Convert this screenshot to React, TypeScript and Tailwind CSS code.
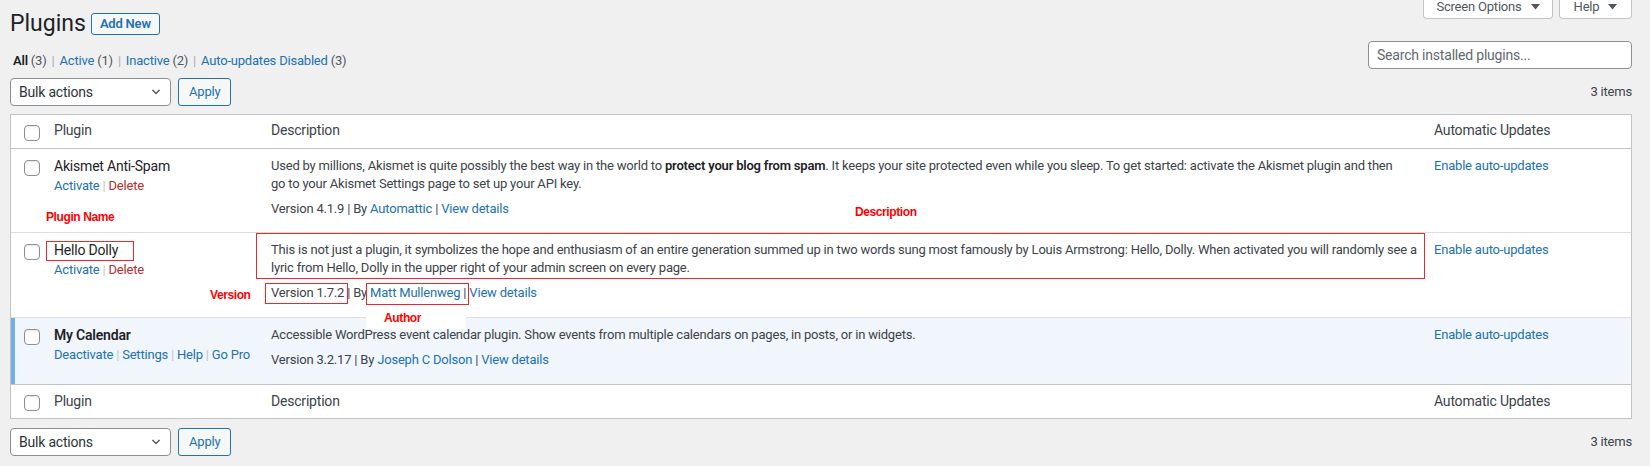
import React from "react";

interface PluginRow {
  name: string;
  active: boolean;
  actions: { label: string; danger?: boolean }[];
  desc: React.ReactNode[];
  version: string;
  author: string;
}

const plugins: PluginRow[] = [
  {
    name: "Akismet Anti-Spam",
    active: false,
    actions: [{ label: "Activate" }, { label: "Delete", danger: true }],
    desc: [
      <>
        Used by millions, Akismet is quite possibly the best way in the world to{" "}
        <strong className="font-semibold text-[#1d2327]">protect your blog from spam</strong>. It keeps your site protected
        even while you sleep. To get started: activate the Akismet plugin and then
      </>,
      <>go to your Akismet Settings page to set up your API key.</>,
    ],
    version: "4.1.9",
    author: "Automattic",
  },
  {
    name: "Hello Dolly",
    active: false,
    actions: [{ label: "Activate" }, { label: "Delete", danger: true }],
    desc: [
      <>
        This is not just a plugin, it symbolizes the hope and enthusiasm of an entire generation summed up in two words
        sung most famously by Louis Armstrong: Hello, Dolly. When activated you will randomly see a
      </>,
      <>lyric from Hello, Dolly in the upper right of your admin screen on every page.</>,
    ],
    version: "1.7.2",
    author: "Matt Mullenweg",
  },
  {
    name: "My Calendar",
    active: true,
    actions: [{ label: "Deactivate" }, { label: "Settings" }, { label: "Help" }, { label: "Go Pro" }],
    desc: [<>Accessible WordPress event calendar plugin. Show events from multiple calendars on pages, in posts, or in widgets.</>],
    version: "3.2.17",
    author: "Joseph C Dolson",
  },
];

const cols = "grid grid-cols-[33px_217px_1163px_1fr]";
const note = "font-['Liberation_Sans',sans-serif] text-[12px] font-bold tracking-[-0.4px] leading-[16px] text-[#ff0000]";
const redBox = "pointer-events-none absolute border-[1.5px] border-[#f0262b]";

const Checkbox = () => (
  <span className="block h-4 w-4 rounded-[4px] border border-[#8c8f94] bg-white shadow-[inset_0_1px_2px_rgba(0,0,0,0.1)]" />
);

const Caret = () => (
  <svg width="9" height="6" viewBox="0 0 9 6" className="ml-[9px]">
    <polygon points="0,0 9,0 4.5,5.5" fill="#50575e" />
  </svg>
);

const BulkBar = () => (
  <div className="flex h-[28px] items-center justify-between">
    <div className="flex items-center gap-[7px]">
      <div className="flex h-[28px] w-[161px] items-center justify-between rounded-[4px] border border-[#8c8f94] bg-white pl-[8px] pr-[8px] text-[14px] text-[#2c3338]">
        <span>Bulk actions</span>
        <svg width="12" height="12" viewBox="0 0 20 20">
          <path d="M5 6l5 5 5-5 2 1-7 7-7-7 2-1z" fill="#555" />
        </svg>
      </div>
      <button className="h-[28px] rounded-[3px] border border-[#2271b1] bg-[#f6f7f7] px-[10px] text-[13px] text-[#2271b1]">
        Apply
      </button>
    </div>
    <span className="text-[13px]">3 items</span>
  </div>
);

const HeadRow = ({ foot }: { foot?: boolean }) => (
  <div className={`${cols} ${foot ? "border-t" : "border-b"} border-[#c3c4c7] text-[14px] leading-[19px]`}>
    <div className="pl-[13px] pt-[10px]">
      <Checkbox />
    </div>
    <div className={`pl-[10px] ${foot ? "pt-[7px] pb-[7px]" : "pt-[6px] pb-[8px]"}`}>Plugin</div>
    <div className={`pl-[10px] ${foot ? "pt-[7px]" : "pt-[6px]"}`}>Description</div>
    <div className={`pl-[10px] ${foot ? "pt-[7px]" : "pt-[6px]"}`}>Automatic Updates</div>
  </div>
);

const Row = ({ p, idx, last }: { p: PluginRow; idx: number; last: boolean }) => {
  const dolly = idx === 1;
  const akismet = idx === 0;

  return (
    <div className={`${cols} ${last ? "" : "border-b border-[#dcdcde]"} ${p.active ? "bg-[#f0f6fc]" : ""}`}>
      {/* check column */}
      <div className={p.active ? "border-l-4 border-[#72aee6] pl-[9px] pt-[11px]" : "pl-[13px] pt-[11px]"}>
        <Checkbox />
      </div>

      {/* plugin title */}
      <div className="relative pl-[10px] pt-[8px]">
        <div className={`text-[14px] leading-[19px] text-[#1d2327] ${p.active ? "font-semibold" : ""}`}>
          <span className="relative">
            {p.name}
            {dolly && <span className={`${redBox} -left-[8px] -top-[1px] h-[20px] w-[88px]`} />}
          </span>
        </div>
        <div className="whitespace-nowrap pt-[1px] text-[13px] leading-[18px]">
          {p.actions.map((a, i) => (
            <span key={a.label}>
              {i > 0 && <span className="mx-[3px] text-[#c3c4c7]">|</span>}
              <a className={a.danger ? "text-[#b32d2e]" : "text-[#2271b1]"}>{a.label}</a>
            </span>
          ))}
        </div>
        {akismet && <span className={`${note} absolute left-[2px] top-[60px]`}>Plugin Name</span>}
        {dolly && <span className={`${note} absolute left-[166px] top-[54px]`}>Version</span>}
      </div>

      {/* description */}
      <div className={`relative px-[10px] pt-[8px] text-[13px] leading-[18px] ${akismet ? "pb-[14px]" : "pb-[15px]"}`}>
        <div className="relative whitespace-nowrap">
          {p.desc.map((line, i) => (
            <div key={i}>{line}</div>
          ))}
          {dolly && <span className={`${redBox} -left-[15px] -right-[11px] -top-[8px] -bottom-[2px]`} />}
        </div>
        <div className="mt-[7px] whitespace-nowrap">
          <span className="relative">
            Version {p.version}
            {dolly && <span className={`${redBox} -left-[6px] -right-[4px] -top-[2px] -bottom-[4px]`} />}
          </span>{" "}
          | By{" "}
          <span className="relative">
            <a className="text-[#2271b1]">{p.author}</a> |
            {dolly && (
              <>
                <span className={`${redBox} -left-[4px] -right-[3px] -top-[2px] -bottom-[5px]`} />
                <span className={`${note} absolute -left-[4px] top-[24px] z-10 h-[20px] w-[100px] bg-white pl-[18px] pt-[1px]`}>
                  Author
                </span>
              </>
            )}
          </span>{" "}
          <a className="text-[#2271b1]">View details</a>
        </div>
        {akismet && <span className={`${note} absolute left-[594px] top-[55px]`}>Description</span>}
      </div>

      {/* auto updates */}
      <div className="pl-[10px] pt-[8px] text-[13px] leading-[18px]">
        <a className="text-[#2271b1]">Enable auto-updates</a>
      </div>
    </div>
  );
};

export default function App() {
  return (
    <div className="min-h-screen overflow-hidden bg-[#f0f0f1] pl-[10px] pr-[18px] font-['Roboto',sans-serif] text-[13px] tracking-[-0.2px] text-[#3c434a]">
      {/* title + screen meta */}
      <div className="flex items-start justify-between">
        <div className="flex items-center pt-[9px]">
          <h1 className="text-[23px] leading-[30px] tracking-normal text-[#1d2327]">Plugins</h1>
          <a className="ml-[5px] rounded-[3px] border border-[#2271b1] bg-[#f6f7f7] px-[8px] py-[3px] text-[13px] font-semibold leading-[14px] text-[#2271b1]">
            Add New
          </a>
        </div>
        <div className="-mt-[7px] flex gap-[6px]">
          <button className="flex h-[26px] w-[130px] items-center justify-center rounded-b-[4px] border border-t-0 border-[#c3c4c7] bg-white pt-[2px] text-[13px] text-[#50575e]">
            Screen Options
            <Caret />
          </button>
          <button className="flex h-[26px] w-[73px] items-center justify-center rounded-b-[4px] border border-t-0 border-[#c3c4c7] bg-white pt-[2px] text-[13px] text-[#50575e]">
            Help
            <Caret />
          </button>
        </div>
      </div>

      {/* filters + search */}
      <div className="flex items-start justify-between">
        <div className="mt-[13px] pl-[3px] leading-[18px] text-[#50575e]">
          <span className="font-semibold text-[#1d2327]">All</span> (3)
          <span className="mx-[5px] text-[#a7aaad]">|</span>
          <a className="text-[#2271b1]">Active</a> (1)
          <span className="mx-[5px] text-[#a7aaad]">|</span>
          <a className="text-[#2271b1]">Inactive</a> (2)
          <span className="mx-[5px] text-[#a7aaad]">|</span>
          <a className="text-[#2271b1]">Auto-updates Disabled</a> (3)
        </div>
        <div className="mt-[2px] flex h-[28px] w-[264px] items-center rounded-[4px] border border-[#8c8f94] bg-white px-[8px] text-[14px] text-[#646970]">
          Search installed plugins...
        </div>
      </div>

      <div className="mt-[8px]">
        <BulkBar />
      </div>

      {/* plugin table */}
      <div className="mt-[8px] border border-[#c3c4c7] bg-white">
        <HeadRow />
        {plugins.map((p, i) => (
          <Row key={p.name} p={p} idx={i} last={i === plugins.length - 1} />
        ))}
        <HeadRow foot />
      </div>

      <div className="mt-[9px]">
        <BulkBar />
      </div>
    </div>
  );
}
